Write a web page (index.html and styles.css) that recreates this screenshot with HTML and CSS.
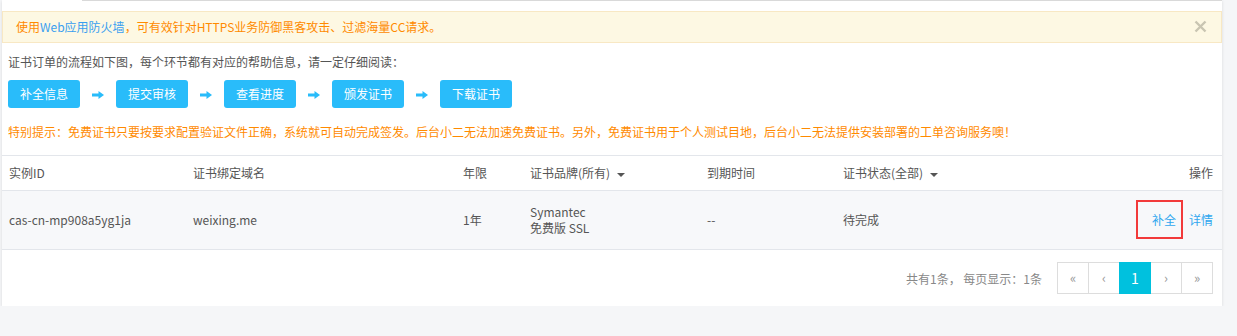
FILE: index.html
```html
<!DOCTYPE html>
<html lang="zh-CN">
<head>
    <meta charset="UTF-8">
    <meta name="viewport" content="width=device-width, initial-scale=1.0">
    <title>证书订单</title>
    <link rel="stylesheet" href="styles.css">
</head>
<body>

    <div class="panel">
        <div class="tab-line"></div>

        <div class="alert">
            <span>使用<a href="#">Web应用防火墙</a>，可有效针对HTTPS业务防御黑客攻击、过滤海量CC请求。</span>
            <span class="alert-close">
                <svg width="13" height="13" viewBox="0 0 13 13"><path d="M1.5 1.5l10 10M11.5 1.5l-10 10" stroke="#c9c5b2" stroke-width="2.4" fill="none"/></svg>
            </span>
        </div>

        <div class="guide">
            <p class="intro">证书订单的流程如下图，每个环节都有对应的帮助信息，请一定仔细阅读：</p>
            <div class="steps">
                <a href="#" class="step">补全信息</a>
                <svg class="arrow" width="12" height="8" viewBox="0 0 12 8"><path d="M0 2.5h6.5V0L12 4 6.5 8V5.5H0z" fill="#29bcfa"/></svg>
                <a href="#" class="step">提交审核</a>
                <svg class="arrow" width="12" height="8" viewBox="0 0 12 8"><path d="M0 2.5h6.5V0L12 4 6.5 8V5.5H0z" fill="#29bcfa"/></svg>
                <a href="#" class="step">查看进度</a>
                <svg class="arrow" width="12" height="8" viewBox="0 0 12 8"><path d="M0 2.5h6.5V0L12 4 6.5 8V5.5H0z" fill="#29bcfa"/></svg>
                <a href="#" class="step">颁发证书</a>
                <svg class="arrow" width="12" height="8" viewBox="0 0 12 8"><path d="M0 2.5h6.5V0L12 4 6.5 8V5.5H0z" fill="#29bcfa"/></svg>
                <a href="#" class="step">下载证书</a>
            </div>
            <p class="tip">特别提示：免费证书只要按要求配置验证文件正确，系统就可自动完成签发。后台小二无法加速免费证书。另外，免费证书用于个人测试目地，后台小二无法提供安装部署的工单咨询服务噢！</p>
        </div>

        <table class="cert-table">
            <colgroup>
                <col style="width: 184px">
                <col style="width: 270px">
                <col style="width: 67px">
                <col style="width: 177px">
                <col style="width: 136px">
                <col style="width: 260px">
                <col>
            </colgroup>
            <thead>
                <tr>
                    <th>实例ID</th>
                    <th>证书绑定域名</th>
                    <th>年限</th>
                    <th>证书品牌(所有)<span class="caret"></span></th>
                    <th>到期时间</th>
                    <th>证书状态(全部)<span class="caret"></span></th>
                    <th class="ops">操作</th>
                </tr>
            </thead>
            <tbody>
                <tr>
                    <td>cas-cn-mp908a5yg1ja</td>
                    <td>weixing.me</td>
                    <td>1年</td>
                    <td>Symantec<br>免费版 SSL</td>
                    <td>--</td>
                    <td>待完成</td>
                    <td class="ops"><a href="#" class="marked">补全</a><a href="#">详情</a></td>
                </tr>
            </tbody>
        </table>

        <div class="pager">
            <span class="pager-info">共有1条， 每页显示：1条</span>
            <ul class="pages">
                <li><a href="#">«</a></li>
                <li><a href="#">‹</a></li>
                <li class="active"><a href="#">1</a></li>
                <li><a href="#">›</a></li>
                <li><a href="#">»</a></li>
            </ul>
        </div>
    </div>

</body>
</html>
```

FILE: styles.css
```css
body {
    margin: 0;
    background: #f5f6f8;
    font-family: "Noto Sans CJK SC", "Noto Sans", sans-serif;
    font-size: 12px;
    color: #555;
}

a {
    text-decoration: none;
}

.panel {
    width: 1220px;
    margin-left: 2px;
    background: #fff;
    box-shadow: 0 1px 3px rgba(0, 0, 0, 0.12);
}

.tab-line {
    height: 1px;
    margin-left: 80px;
    background: #d9d9d9;
}

.alert {
    display: flex;
    justify-content: space-between;
    align-items: center;
    margin-top: 10px;
    height: 30px;
    padding: 0 14px 0 13px;
    background: #fdf8e3;
    border: 1px solid #f8e8c4;
    color: #ff8a00;
    line-height: 30px;
}

.alert a {
    color: #3a9ff0;
}

.alert-close {
    display: flex;
    margin-top: -1px;
}

.guide {
    padding: 0 6px;
}

.intro {
    margin: 9px 0 0;
    line-height: 20px;
}

.steps {
    display: flex;
    align-items: center;
    gap: 12px;
    margin-top: 8px;
}

.step {
    display: block;
    width: 72px;
    height: 28px;
    line-height: 28px;
    text-align: center;
    color: #fff;
    background: #29bcfa;
    border-radius: 3px;
}

.arrow {
    display: block;
    margin-top: 1px;
}

.tip {
    margin: 14px 0 0;
    line-height: 20px;
    color: #ff8a00;
}

.cert-table {
    width: 100%;
    margin-top: 13px;
    border-collapse: collapse;
    table-layout: fixed;
}

.cert-table th,
.cert-table td {
    padding: 0 7px;
    text-align: left;
    line-height: 16px;
}

.cert-table th {
    height: 34px;
    font-weight: normal;
    border-top: 1px solid #e3e6eb;
    border-bottom: 1px solid #e3e6eb;
}

.cert-table td {
    height: 58px;
    background: #f7f8fa;
    border-bottom: 1px solid #e3e6eb;
}

.cert-table .ops {
    text-align: right;
    padding-right: 9px;
}

.ops a {
    color: #2fa7ef;
    margin-left: 13px;
}

.ops a.marked {
    position: relative;
    margin-left: 0;
}

.ops a.marked::after {
    content: "";
    position: absolute;
    left: -16px;
    right: -7px;
    top: -11px;
    bottom: -11px;
    border: 2px solid #f23a3a;
}

.caret {
    display: inline-block;
    margin-left: 7px;
    vertical-align: middle;
    border-left: 4px solid transparent;
    border-right: 4px solid transparent;
    border-top: 4px solid #555;
}

.pager {
    display: flex;
    justify-content: flex-end;
    align-items: center;
    padding: 12px 9px 12px 0;
}

.pager-info {
    color: #888;
    margin-right: 16px;
}

.pages {
    display: flex;
    list-style: none;
    margin: 0;
    padding: 0;
}

.pages li {
    margin-left: -1px;
}

.pages a {
    display: block;
    width: 30px;
    height: 30px;
    line-height: 30px;
    text-align: center;
    border: 1px solid #ddd;
    color: #999;
    font-size: 13px;
}

.pages .active a {
    position: relative;
    background: #00c1de;
    border-color: #00c1de;
    color: #fff;
    font-size: 14px;
}
```
